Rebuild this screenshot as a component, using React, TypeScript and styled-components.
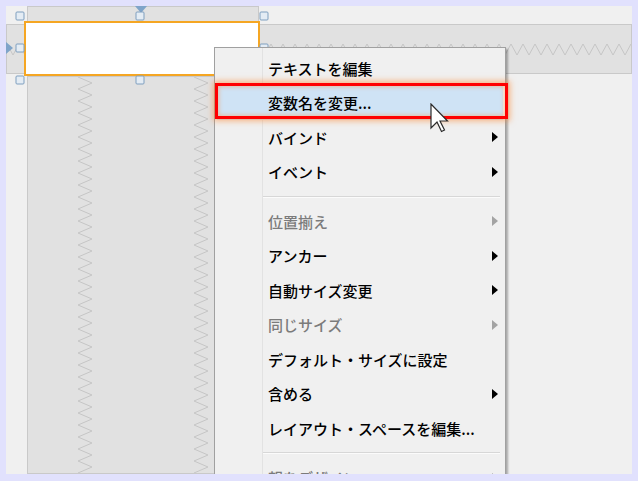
import React from "react";
import styled, { createGlobalStyle, css } from "styled-components";

const GlobalStyle = createGlobalStyle`
  html, body { margin: 0; padding: 0; }
  body {
    background: #e1e1fd;
    font-family: "Noto Sans CJK JP", "Noto Sans", sans-serif;
  }
`;

const Frame = styled.div`
  width: 638px;
  height: 481px;
  box-sizing: border-box;
  padding: 6px;
  background: #e1e1fd;
`;

const Panel = styled.div`
  position: relative;
  width: 626px;
  height: 468px;
  overflow: hidden;
  background: #f0f0f0;
`;

const Designer = styled.div`
  display: grid;
  grid-template-columns: 21px 232px 1fr;
  grid-template-rows: 18px 52px 1fr;
  height: 100%;
`;

const Band = styled.div`
  position: relative;
  box-sizing: border-box;
  background: #e1e1e1;
  border: 1px solid #c9c9c9;
  overflow: hidden;
`;

const TopBand = styled(Band)`
  grid-column: 2;
  grid-row: 1;
  margin-bottom: 1px;
`;

const RowBand = styled(Band)`
  grid-column: 1 / -1;
  grid-row: 2;
  margin-bottom: 2px;
`;

const ColumnBand = styled(Band)`
  grid-column: 2;
  grid-row: 3;
`;

const Zigzag = styled.svg`
  position: absolute;
  inset: 0;
  width: 100%;
  height: 100%;
  pointer-events: none;
`;

const Selection = styled.div`
  position: absolute;
  left: 14px;
  top: 10px;
  width: 244px;
  height: 64px;
  box-sizing: border-box;
  padding: 5px 4px 4px 4px;
`;

const Field = styled.div`
  height: 100%;
  box-sizing: border-box;
  background: #ffffff;
  border: 2px solid #f5a623;
`;

const Handle = styled.div<{ $x: number; $y: number }>`
  position: absolute;
  left: ${(p) => p.$x}%;
  top: ${(p) => p.$y}%;
  width: 7px;
  height: 7px;
  transform: translate(-50%, -50%);
  background: #e4ecf4;
  border: 1px solid #7f9fbf;
  border-radius: 1.5px;
`;

const AnchorDown = styled.div`
  position: absolute;
  left: 129px;
  top: 0;
  width: 0;
  height: 0;
  border-left: 6px solid transparent;
  border-right: 6px solid transparent;
  border-top: 7px solid #7fa4c9;
`;

const AnchorRight = styled.div`
  position: absolute;
  left: 0;
  top: 36px;
  width: 0;
  height: 0;
  border-top: 6px solid transparent;
  border-bottom: 6px solid transparent;
  border-left: 7px solid #7fa4c9;
`;

const Menu = styled.div`
  position: absolute;
  left: 208px;
  top: 41px;
  width: 292px;
  box-sizing: border-box;
  border: 1px solid #a0a0a0;
  padding: 3px 2px 40px 2px;
  background:
    linear-gradient(90deg, transparent 47px, #e2e2e2 47px, #e2e2e2 48px, transparent 48px),
    #f0f0f0;
  box-shadow: 2px 2px 2px rgba(0, 0, 0, 0.3);
  z-index: 2;
`;

const MenuItem = styled.div<{ $disabled?: boolean; $active?: boolean }>`
  position: relative;
  display: flex;
  align-items: center;
  height: 34.5px;
  padding: 0 5px 0 51px;
  font-size: 15px;
  font-weight: 500;
  color: ${(p) => (p.$disabled ? "#7b7b7b" : "#000000")};
  white-space: nowrap;
  ${(p) =>
    p.$active &&
    css`
      background: #cfe3f5;
      &::after {
        content: "";
        position: absolute;
        top: -2.5px;
        bottom: 1px;
        left: -2px;
        right: -5px;
        border: 3px solid #ff0000;
        box-shadow: 0 0 6px 2px rgba(255, 130, 40, 0.55),
          inset 0 0 4px 1px rgba(255, 140, 60, 0.45);
      }
    `}
`;

const Label = styled.span`
  flex: 1;
`;

const SubArrow = styled.span<{ $disabled?: boolean }>`
  width: 0;
  height: 0;
  border-top: 5px solid transparent;
  border-bottom: 5px solid transparent;
  border-left: 6px solid ${(p) => (p.$disabled ? "#a3a3a3" : "#000000")};
`;

const Separator = styled.div`
  height: 15px;
  display: flex;
  align-items: center;
  padding: 0 3px 0 46px;
  &::before {
    content: "";
    flex: 1;
    border-top: 1px solid #d7d7d7;
    border-bottom: 1px solid #fbfbfb;
  }
`;

const Cursor = styled.svg`
  position: absolute;
  left: 424px;
  top: 97px;
  z-index: 3;
  pointer-events: none;
`;

type Entry =
  | { kind: "item"; label: string; sub?: boolean; disabled?: boolean; active?: boolean }
  | { kind: "sep" };

const entries: Entry[] = [
  { kind: "item", label: "テキストを編集" },
  { kind: "item", label: "変数名を変更...", active: true },
  { kind: "item", label: "バインド", sub: true },
  { kind: "item", label: "イベント", sub: true },
  { kind: "sep" },
  { kind: "item", label: "位置揃え", sub: true, disabled: true },
  { kind: "item", label: "アンカー", sub: true },
  { kind: "item", label: "自動サイズ変更", sub: true },
  { kind: "item", label: "同じサイズ", sub: true, disabled: true },
  { kind: "item", label: "デフォルト・サイズに設定" },
  { kind: "item", label: "含める", sub: true },
  { kind: "item", label: "レイアウト・スペースを編集..." },
  { kind: "sep" },
  { kind: "item", label: "親をデザイン", sub: true, disabled: true },
];

function vZig(x0: number, amp: number, len: number) {
  const pts: string[] = [];
  for (let y = 0, i = 0; y <= len; y += 6, i++) {
    pts.push(`${i % 2 === 0 ? x0 : x0 + amp},${y}`);
  }
  return pts.join(" ");
}

function hZig(y0: number, amp: number, len: number) {
  const pts: string[] = [];
  for (let x = 0, i = 0; x <= len; x += 6, i++) {
    pts.push(`${x},${i % 2 === 0 ? y0 : y0 + amp}`);
  }
  return pts.join(" ");
}

const handles = [
  [0, 0],
  [49, 0],
  [100, 0],
  [0, 50],
  [100, 50],
  [0, 100],
  [49, 100],
  [100, 100],
];

export default function App() {
  return (
    <>
      <GlobalStyle />
      <Frame>
        <Panel>
          <Designer>
            <TopBand />
            <RowBand>
              <Zigzag>
                <polyline
                  points={hZig(19, 11, 640)}
                  fill="none"
                  stroke="#c6c6c6"
                  strokeWidth="1"
                />
              </Zigzag>
            </RowBand>
            <ColumnBand>
              <Zigzag>
                <polyline
                  points={vZig(50, 14, 420)}
                  fill="none"
                  stroke="#c6c6c6"
                  strokeWidth="1"
                />
                <polyline
                  points={vZig(166, 14, 420)}
                  fill="none"
                  stroke="#c6c6c6"
                  strokeWidth="1"
                />
              </Zigzag>
            </ColumnBand>
          </Designer>

          <AnchorDown />
          <AnchorRight />

          <Selection>
            <Field />
            {handles.map(([x, y], i) => (
              <Handle key={i} $x={x} $y={y} />
            ))}
          </Selection>

          <Menu>
            {entries.map((e, i) =>
              e.kind === "sep" ? (
                <Separator key={i} />
              ) : (
                <MenuItem key={i} $disabled={e.disabled} $active={e.active}>
                  <Label>{e.label}</Label>
                  {e.sub && <SubArrow $disabled={e.disabled} />}
                </MenuItem>
              )
            )}
          </Menu>

          <Cursor width="20" height="30" viewBox="0 0 20 30">
            <polygon
              points="1,1 1,25 7,19 11.5,28.5 14.5,27 10,18 17.5,18"
              fill="#ffffff"
              stroke="#2a2a2a"
              strokeWidth="1.2"
              strokeLinejoin="miter"
            />
          </Cursor>
        </Panel>
      </Frame>
    </>
  );
}
